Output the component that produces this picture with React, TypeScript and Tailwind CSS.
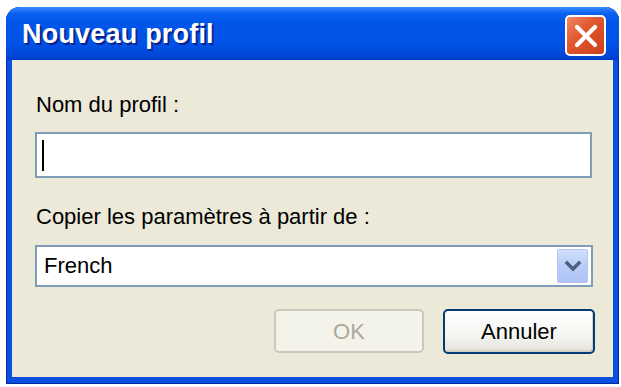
import React from "react";

export default function App() {
  const font = { fontFamily: '"Liberation Sans", Arial, sans-serif' };
  return (
    <div className="w-[621px] h-[387px] bg-white overflow-hidden" style={font}>
      <div className="ml-[6px] mt-[7px] w-[613px] h-[377px] flex flex-col rounded-t-[14px] bg-[#0A4FDF] shadow-[inset_0_0_0_1px_#002A9E]">
        {/* Title bar */}
        <div className="h-[53px] shrink-0 flex items-center justify-between pl-[16px] pr-[13px] rounded-t-[14px] bg-[linear-gradient(180deg,#3A8CFF_0%,#0A62F0_12%,#0155E8_30%,#0052E6_70%,#0046D8_92%,#003BC4_100%)]">
          <span className="text-white font-bold text-[27px] leading-none mt-[2px] tracking-[0.2px] [text-shadow:2px_2px_0_#0A238C]">
            Nouveau profil
          </span>
          <div className="w-[41px] h-[41px] mt-[4px] rounded-[5px] border-2 border-white bg-[linear-gradient(135deg,#F08A66_0%,#E2582F_40%,#C9401B_100%)] flex items-center justify-center">
            <svg width="26" height="26" viewBox="0 0 26 26">
              <path d="M4 4 L22 22 M22 4 L4 22" stroke="white" strokeWidth="4.2" strokeLinecap="round" />
            </svg>
          </div>
        </div>
        {/* Client area */}
        <div className="flex-1 mx-[6px] mb-[7px] bg-[#ECE9D8] flex flex-col pl-[23px] pt-[32px]">
          <div className="text-[22px] leading-[26px] text-black pl-[1px]">Nom du profil :</div>
          <div className="mt-[14px] w-[557px] h-[46px] border-2 border-[#7F9DB9] bg-white flex items-center pl-[5px]">
            <div className="w-[2px] h-[31px] bg-black" />
          </div>
          <div className="mt-[26px] text-[22px] leading-[26px] text-black pl-[1px]">Copier les paramètres à partir de :</div>
          <div className="mt-[15px] w-[558px] h-[42px] border-2 border-[#7F9DB9] bg-white flex items-center justify-between pl-[7px] pr-[3px]">
            <span className="text-[22px] leading-none text-black">French</span>
            <div className="w-[31px] h-[34px] rounded-[2px] border border-[#B4C6F0] bg-[linear-gradient(180deg,#D2DFFD_0%,#B9CCF8_50%,#AFC4F5_100%)] flex items-center justify-center">
              <svg width="18" height="12" viewBox="0 0 18 12">
                <path d="M3 3 L9 9 L15 3" stroke="#4D6185" strokeWidth="3.4" fill="none" strokeLinecap="square" />
              </svg>
            </div>
          </div>
          <div className="mt-[22px] flex justify-end gap-[19px] pr-[18px]">
            <div className="w-[150px] h-[44px] rounded-[5px] border-2 border-[#CAC8BB] bg-[#F4F3EA] flex items-center justify-center text-[22px] text-[#ACA899]">
              OK
            </div>
            <div className="w-[152px] h-[45px] rounded-[5px] border-2 border-[#003C74] bg-[linear-gradient(180deg,#FFFFFF_0%,#F5F5F1_60%,#E3E2DA_100%)] shadow-[inset_-1px_-2px_0_#D6D0C5] flex items-center justify-center text-[22px] text-black">
              Annuler
            </div>
          </div>
        </div>
      </div>
    </div>
  );
}
